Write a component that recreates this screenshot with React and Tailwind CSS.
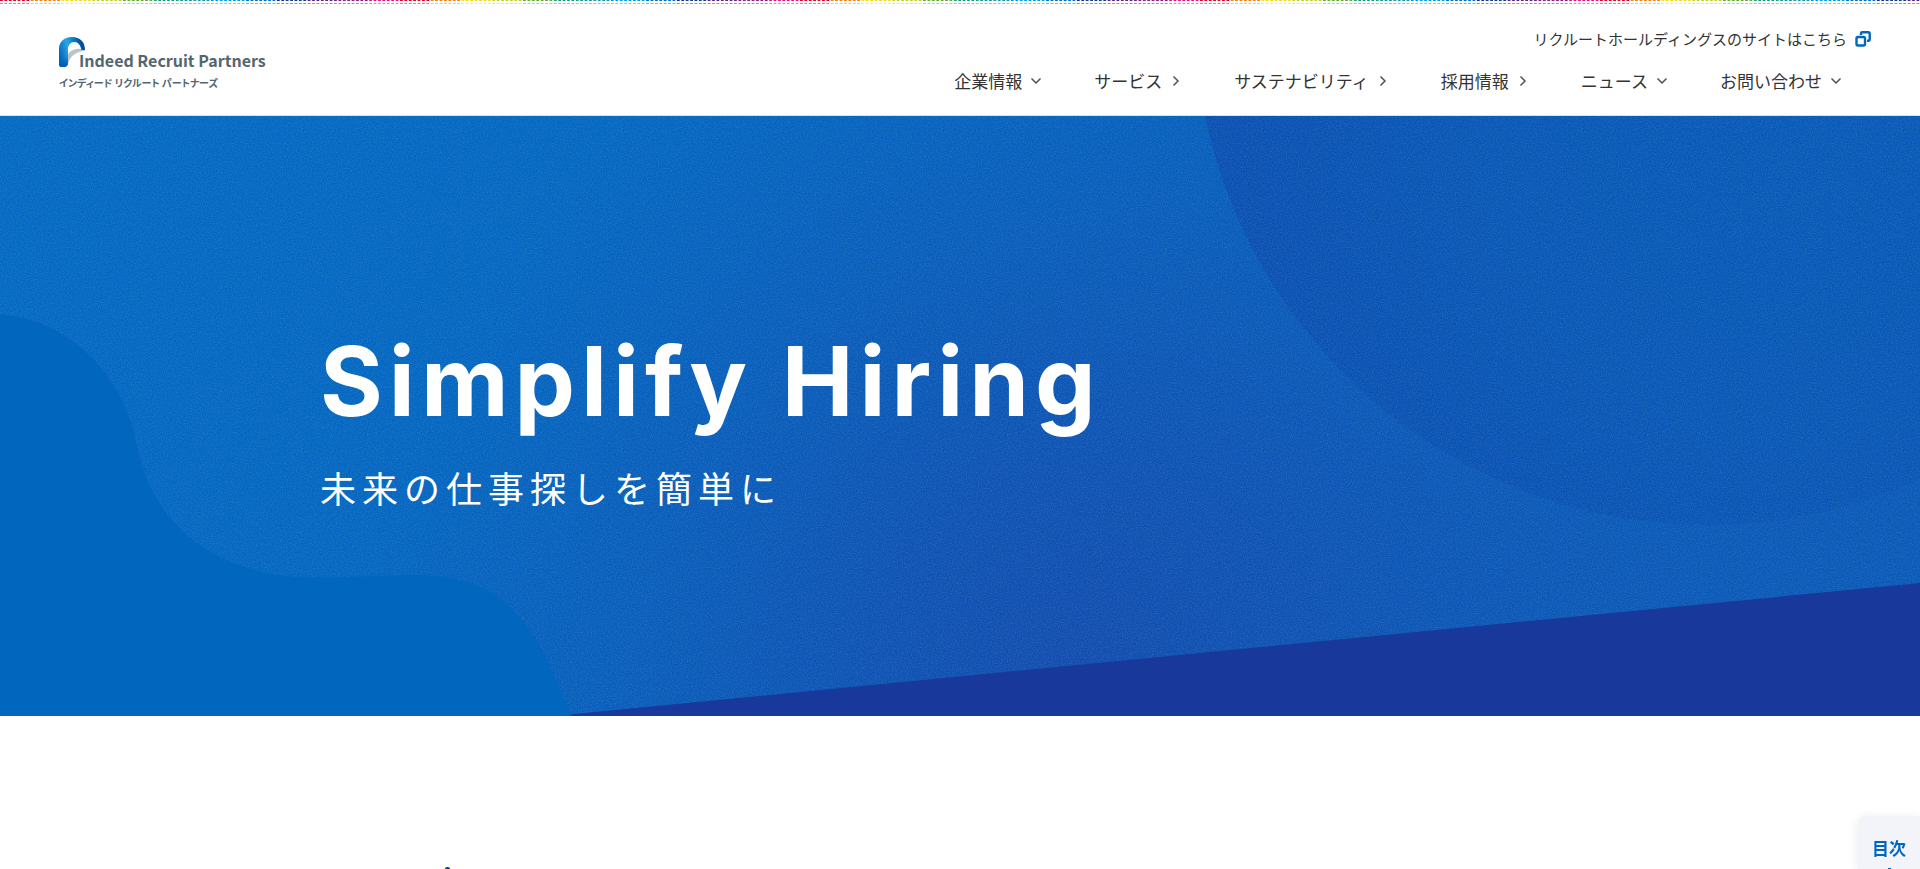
import { ChevronDown, ChevronRight } from 'lucide-react'

const navItems = [
  { label: '企業情報', menu: true },
  { label: 'サービス' },
  { label: 'サステナビリティ' },
  { label: '採用情報' },
  { label: 'ニュース', menu: true },
  { label: 'お問い合わせ', menu: true },
]

const dotColors = [
  '#e3002b', '#f08519', '#f8dc1c', '#bfd232', '#62ab3c', '#1f9c7f', '#1797b4',
  '#009fe8', '#0070c4', '#123a8c', '#5d2283', '#8b1d82', '#e3157f',
]

// each colour gets seven dots, the strip repeats every 400px
function RainbowBar() {
  const dots = dotColors.flatMap((color, c) =>
    Array.from({ length: 7 }, (_, i) => ({ color, x: ((c * 7 + i) * 400) / 91 }))
  )
  return (
    <svg className="block w-full h-1" aria-hidden="true">
      <defs>
        <pattern id="dots" width="400" height="4" patternUnits="userSpaceOnUse">
          {dots.map(d => (
            <g key={d.x} fill={d.color}>
              <rect x={d.x} y="0" width="2.8" height="1" />
              <rect x={d.x} y="3" width="2.8" height="1" opacity="0.55" />
            </g>
          ))}
        </pattern>
      </defs>
      <rect width="100%" height="4" fill="url(#dots)" />
    </svg>
  )
}

function Logo() {
  return (
    <a href="#" className="flex flex-col text-[#54666f] whitespace-nowrap">
      <span className="flex items-baseline">
        <svg className="w-[26px] h-[30px] -mr-1.5" viewBox="0 0 26 30" aria-hidden="true">
          <defs>
            <linearGradient id="arch" x1="0" y1="0.6" x2="1" y2="0.3">
              <stop offset="0" stopColor="#0065bb" />
              <stop offset="0.4" stopColor="#2aa7e4" />
              <stop offset="0.7" stopColor="#0074c4" />
              <stop offset="1" stopColor="#003f8e" />
            </linearGradient>
            <linearGradient id="leg" x1="0" y1="0" x2="0" y2="1">
              <stop offset="0.4" stopColor="#0068be" stopOpacity="0" />
              <stop offset="0.95" stopColor="#005bb0" />
            </linearGradient>
          </defs>
          <path d="M9 27V17C13 12 19 11 26 12.500V13.500C17 15 11 19 9 27Z" fill="#b9c3ca" />
          <path d="M0 27V12C0 4.500 5.500 0 13 0C21 0 26 5 26 13H22.500C21.500 8 19 5 15.500 5C11.500 5 9 8 9 12.500V26C9 29 7 30 4 30H2.500C1 30 0 29 0 27Z" fill="url(#arch)" />
          <path d="M0 27V12H9V26C9 29 7 30 4 30H2.500C1 30 0 29 0 27Z" fill="url(#leg)" />
        </svg>
        <span className="text-base leading-5 font-bold">Indeed Recruit Partners</span>
      </span>
      <span className="mt-[5px] text-[10px] leading-4 font-bold [font-feature-settings:'palt']">インディード リクルート パートナーズ</span>
    </a>
  )
}

function Header() {
  return (
    <header className="flex items-start justify-between pl-[59px] pr-[49px] pt-[25px] pb-[22px] border-b border-[#dbe3ea]">
      <div className="pt-2"><Logo /></div>
      <div className="flex flex-col items-end text-[#333]">
        <a href="#" className="flex items-center gap-2 text-[15px] leading-5">
          リクルートホールディングスのサイトはこちら
          <svg className="w-4 h-4" viewBox="0 0 16 16" fill="none" stroke="#0066bf" strokeWidth="2.4" aria-hidden="true">
            <rect x="1.500" y="6" width="8.500" height="8.500" rx="1.500" />
            <path d="M6 4V2.500A1.200 1.200 0 0 1 7.200 1.300H13.500A1.200 1.200 0 0 1 14.700 2.500V8.500A1.200 1.200 0 0 1 13.500 9.700H12" />
          </svg>
        </a>
        <nav className="mt-5 mr-[27px]">
          <ul className="flex gap-[50px] text-[17px] leading-6">
            {navItems.map(item => (
              <li key={item.label}>
                <a href="#" className="flex items-center gap-1.5">
                  {item.label}
                  {item.menu
                    ? <ChevronDown className="w-4 h-4 text-[#555]" strokeWidth={2.5} />
                    : <ChevronRight className="w-4 h-4 text-[#555]" strokeWidth={2.5} />}
                </a>
              </li>
            ))}
          </ul>
        </nav>
      </div>
    </header>
  )
}

function HeroArt() {
  return (
    <svg className="absolute inset-0 w-full h-full" viewBox="0 0 1920 600" preserveAspectRatio="xMidYMid slice" aria-hidden="true">
      <defs>
        <linearGradient id="base" x1="0" y1="0" x2="1" y2="0.3">
          <stop offset="0" stopColor="#0369c3" />
          <stop offset="0.5" stopColor="#0464bf" />
          <stop offset="1" stopColor="#0a58b7" />
        </linearGradient>
        <radialGradient id="deep" gradientUnits="userSpaceOnUse" cx="1080" cy="560" r="720">
          <stop offset="0" stopColor="#124bae" />
          <stop offset="0.35" stopColor="#0f4fb1" stopOpacity="0.75" />
          <stop offset="1" stopColor="#0b5ab9" stopOpacity="0" />
        </radialGradient>
        <radialGradient id="disc" gradientUnits="userSpaceOnUse" cx="1800" cy="0" r="660">
          <stop offset="0" stopColor="#0759b7" />
          <stop offset="0.5" stopColor="#0856b5" />
          <stop offset="1" stopColor="#0b4db0" />
        </radialGradient>
        <filter id="grain" x="0" y="0" width="100%" height="100%">
          <feTurbulence type="fractalNoise" baseFrequency="0.8" numOctaves="2" />
          <feColorMatrix values="0 0 0 0 0.4  0 0 0 0 0.7  0 0 0 0 0.8  1 0 0 0 -0.35" />
        </filter>
      </defs>
      <rect width="1920" height="600" fill="url(#base)" />
      <rect width="1920" height="600" fill="url(#deep)" />
      <circle cx="1708" cy="-105" r="514" fill="url(#disc)" />
      <rect width="1920" height="600" filter="url(#grain)" opacity="0.3" />
      <path d="M554 600L1920 467V600Z" fill="#18389b" />
      <path d="M0 198C75 206 125 262 138 334C152 400 200 446 277 459C320 464 360 460 410 459C500 459 530 495 571 600H0Z" fill="#0066be" />
    </svg>
  )
}

export default function App() {
  return (
    <div className="min-h-screen bg-white overflow-hidden font-['Noto_Sans_CJK_JP',sans-serif]" lang="ja">
      <RainbowBar />
      <Header />
      <main>
        <section className="relative h-[600px] px-[320px] pt-1 flex flex-col justify-center text-white">
          <HeroArt />
          <h1 className="relative font-['Inter',sans-serif] text-8xl leading-[116px] font-bold tracking-[6px] whitespace-nowrap">Simplify Hiring</h1>
          <p className="relative mt-[22px] text-4xl leading-[52px] tracking-[6px] whitespace-nowrap">未来の仕事探しを簡単に</p>
        </section>
        <section className="px-[320px] pt-[151px]">
          <div className="ml-[125px] w-[5px] h-[2px] rounded-t-full bg-[#18389b]" />
        </section>
      </main>
      <button type="button" className="fixed right-0 bottom-0 w-[62px] h-[53px] pt-5 overflow-hidden rounded-tl-lg bg-[#f3f4fa] shadow-[0_2px_12px_rgba(0,0,0,0.09)] text-[17px] leading-6 font-bold text-[#0066bf]">
        目次
        <span className="block mx-auto mt-2 w-[3px] h-px bg-[#0066bf]" />
      </button>
    </div>
  )
}
